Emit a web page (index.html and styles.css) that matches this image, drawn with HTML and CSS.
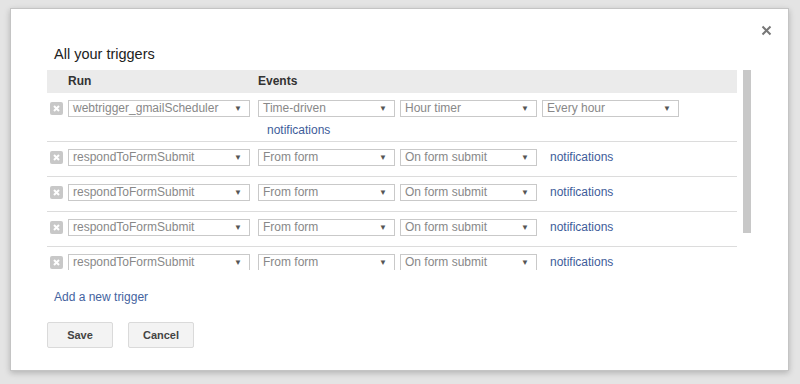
FILE: index.html
```html
<!DOCTYPE html>
<html lang="en">

<head>
    <meta charset="UTF-8">
    <title>All your triggers</title>
    <link rel="stylesheet" href="styles.css">
</head>

<body>
    <div class="dialog">
        <span class="close">
            <svg width="11" height="11" viewBox="0 0 11 11"><path d="M1.5 1.5L9.5 9.5M9.5 1.5L1.5 9.5" stroke="#777" stroke-width="2"/></svg>
        </span>
        <h1 class="title">All your triggers</h1>
        <div class="list">
            <div class="list-inner">
                <div class="list-head">
                    <div class="col-run">Run</div>
                    <div class="col-events">Events</div>
                </div>
                <!-- 第一行 时间驱动 -->
                <div class="row">
                    <div class="line">
                        <span class="del"><svg width="13" height="13" viewBox="0 0 13 13"><rect width="13" height="13" rx="2" fill="#c8c8c8"/><path d="M4 4L9 9M9 4L4 9" stroke="#fff" stroke-width="2"/></svg></span>
                        <div class="select wide"><span>webtrigger_gmailScheduler</span><i>&#9660;</i></div>
                        <div class="select ev"><span>Time-driven</span><i>&#9660;</i></div>
                        <div class="select"><span>Hour timer</span><i>&#9660;</i></div>
                        <div class="select last"><span>Every hour</span><i>&#9660;</i></div>
                    </div>
                    <a class="notify sub" href="#">notifications</a>
                </div>
                <div class="row">
                    <div class="line">
                        <span class="del"><svg width="13" height="13" viewBox="0 0 13 13"><rect width="13" height="13" rx="2" fill="#c8c8c8"/><path d="M4 4L9 9M9 4L4 9" stroke="#fff" stroke-width="2"/></svg></span>
                        <div class="select wide"><span>respondToFormSubmit</span><i>&#9660;</i></div>
                        <div class="select ev"><span>From form</span><i>&#9660;</i></div>
                        <div class="select"><span>On form submit</span><i>&#9660;</i></div>
                        <a class="notify" href="#">notifications</a>
                    </div>
                </div>
                <div class="row">
                    <div class="line">
                        <span class="del"><svg width="13" height="13" viewBox="0 0 13 13"><rect width="13" height="13" rx="2" fill="#c8c8c8"/><path d="M4 4L9 9M9 4L4 9" stroke="#fff" stroke-width="2"/></svg></span>
                        <div class="select wide"><span>respondToFormSubmit</span><i>&#9660;</i></div>
                        <div class="select ev"><span>From form</span><i>&#9660;</i></div>
                        <div class="select"><span>On form submit</span><i>&#9660;</i></div>
                        <a class="notify" href="#">notifications</a>
                    </div>
                </div>
                <div class="row">
                    <div class="line">
                        <span class="del"><svg width="13" height="13" viewBox="0 0 13 13"><rect width="13" height="13" rx="2" fill="#c8c8c8"/><path d="M4 4L9 9M9 4L4 9" stroke="#fff" stroke-width="2"/></svg></span>
                        <div class="select wide"><span>respondToFormSubmit</span><i>&#9660;</i></div>
                        <div class="select ev"><span>From form</span><i>&#9660;</i></div>
                        <div class="select"><span>On form submit</span><i>&#9660;</i></div>
                        <a class="notify" href="#">notifications</a>
                    </div>
                </div>
                <div class="row">
                    <div class="line">
                        <span class="del"><svg width="13" height="13" viewBox="0 0 13 13"><rect width="13" height="13" rx="2" fill="#c8c8c8"/><path d="M4 4L9 9M9 4L4 9" stroke="#fff" stroke-width="2"/></svg></span>
                        <div class="select wide"><span>respondToFormSubmit</span><i>&#9660;</i></div>
                        <div class="select ev"><span>From form</span><i>&#9660;</i></div>
                        <div class="select"><span>On form submit</span><i>&#9660;</i></div>
                        <a class="notify" href="#">notifications</a>
                    </div>
                </div>
            </div>
            <div class="scrollbar"><div class="thumb"></div></div>
        </div>
        <a class="add" href="#">Add a new trigger</a>
        <div class="buttons">
            <button class="btn">Save</button>
            <button class="btn">Cancel</button>
        </div>
    </div>
</body>

</html>
```

FILE: styles.css
```css
* {
    margin: 0;
    padding: 0;
    box-sizing: border-box;
}

body {
    background: #e4e4e4;
    font-family: "Liberation Sans", Arial, sans-serif;
    width: 800px;
    height: 384px;
    overflow: hidden;
    padding: 8px 0 0 10px;
}

.dialog {
    position: relative;
    width: 779px;
    height: 363px;
    background: #fff;
    border: 1px solid #c4c4c4;
    box-shadow: 0 2px 6px rgba(0, 0, 0, 0.22);
    padding: 36px 0 0 36px;
}

.close {
    position: absolute;
    top: 16px;
    right: 16px;
}

.close svg {
    display: block;
}

.title {
    font-size: 14.5px;
    font-weight: normal;
    line-height: 19px;
    color: #222;
    padding-left: 7px;
    margin-bottom: 6px;
}

/* 列表 + 滚动条 */
.list {
    display: flex;
    align-items: flex-start;
    gap: 6px;
    height: 200px;
    overflow: hidden;
}

.list-inner {
    width: 690px;
}

.scrollbar {
    width: 8px;
}

.thumb {
    height: 163px;
    background: #c8c8c8;
}

.list-head {
    display: flex;
    height: 23px;
    line-height: 23px;
    background: #ebebeb;
    font-size: 12px;
    font-weight: bold;
    color: #333;
}

.col-run {
    width: 211px;
    padding-left: 21px;
}

.row {
    border-bottom: 1px solid #dcdcdc;
    padding: 7px 0 10px 3px;
}

.line {
    display: flex;
    align-items: center;
}

.del {
    width: 13px;
    height: 13px;
    margin-right: 5px;
}

.del svg {
    display: block;
}

.select {
    display: flex;
    justify-content: space-between;
    align-items: center;
    width: 137px;
    height: 17px;
    border: 1px solid #c9c9c9;
    font-size: 12px;
    line-height: 15px;
    color: #888;
    padding: 0 7px 0 4px;
    margin-right: 5px;
}

.select i {
    font-style: normal;
    font-size: 8px;
    color: #555;
}

.select.wide {
    width: 182px;
    margin-right: 8px;
}

.select.last {
    margin-right: 0;
}

.notify {
    font-size: 12px;
    line-height: 15px;
    color: #3e5c9a;
    text-decoration: none;
    margin-left: 8px;
}

.notify.sub {
    display: block;
    margin: 6px 0 -7px 217px;
}

.add {
    display: block;
    font-size: 12px;
    line-height: 16px;
    color: #4463a0;
    text-decoration: none;
    padding-left: 7px;
    margin-top: 19px;
}

.buttons {
    display: flex;
    gap: 15px;
    margin-top: 17px;
}

.btn {
    width: 66px;
    height: 26px;
    background: #f3f3f3;
    border: 1px solid #dadada;
    border-radius: 2px;
    font-family: "Liberation Sans", Arial, sans-serif;
    font-size: 11px;
    font-weight: bold;
    color: #444;
}
```
